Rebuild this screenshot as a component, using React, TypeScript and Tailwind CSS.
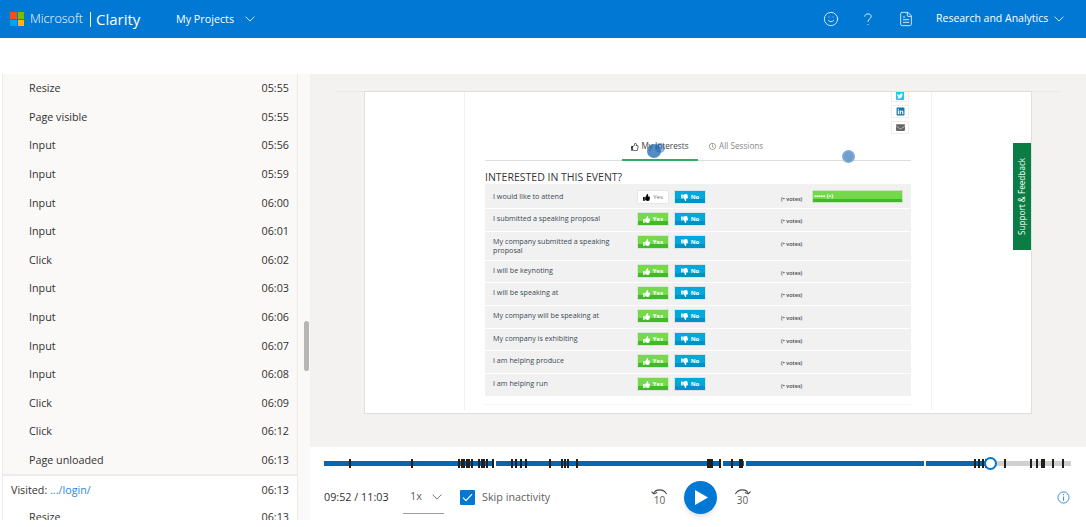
import { FaThumbsUp, FaThumbsDown, FaTwitter, FaLinkedin, FaEnvelope, FaRegThumbsUp, FaRegClock } from "react-icons/fa";
import { Smile, FileText } from "lucide-react";

const EVENTS = [
  ["Resize", "05:55"],
  ["Page visible", "05:55"],
  ["Input", "05:56"],
  ["Input", "05:59"],
  ["Input", "06:00"],
  ["Input", "06:01"],
  ["Click", "06:02"],
  ["Input", "06:03"],
  ["Input", "06:06"],
  ["Input", "06:07"],
  ["Input", "06:08"],
  ["Click", "06:09"],
  ["Click", "06:12"],
  ["Page unloaded", "06:13"],
];

const QUESTIONS = [
  { label: "I would like to attend", h: "h-[24px] pt-[6px]", first: true },
  { label: "I submitted a speaking proposal", h: "h-[22px] pt-[3px]" },
  { label: "My company submitted a speaking proposal", h: "h-[28px] pt-[3px]" },
  { label: "I will be keynoting", h: "h-[21px] pt-[3px]" },
  { label: "I will be speaking at", h: "h-[22px] pt-[3px]" },
  { label: "My company will be speaking at", h: "h-[22px] pt-[3px]" },
  { label: "My company is exhibiting", h: "h-[21px] pt-[3px]" },
  { label: "I am helping produce", h: "h-[22px] pt-[3px]" },
  { label: "I am helping run", h: "h-[22px] pt-[3px]" },
];

// tick positions on the timeline, page x minus track start (324)
const TICKS = [
  25, 87, 134, 137, 139, 142, 144, 147, 154, 157, 159, 162, 168, 187, 191, 196, 201, 225, 237, 240, 243, 252, 383, 385,
  387, 395, 407, 415, 417, 650, 654, 658, 661, 680, 706, 712, 717, 719, 728, 738,
];

function Chevron({ className }: { className: string }) {
  return (
    <svg viewBox="0 0 12 7" className={className} fill="none" stroke="currentColor" strokeWidth="1">
      <path d="M0.7 0.7 L6 6 L11.3 0.7" />
    </svg>
  );
}

function MicrosoftLogo() {
  return (
    <div className="grid grid-cols-2 gap-px w-[14px] h-[14px]">
      <span className="bg-[#f25022]" />
      <span className="bg-[#7fba00]" />
      <span className="bg-[#00a4ef]" />
      <span className="bg-[#ffb900]" />
    </div>
  );
}

function Header() {
  return (
    <header className="h-[38px] shrink-0 bg-[#0078d4] text-white flex items-center pl-[10px] pr-[22px]">
      <MicrosoftLogo />
      <span className="ml-[6px] w-[53px] text-[12.5px] font-light leading-none">Microsoft</span>
      <span className="ml-[7px] w-px h-[15px] bg-white" />
      <span className="ml-[5px] w-[44px] text-[15px] leading-none">Clarity</span>
      <span className="ml-[36px] w-[57px] text-[10.75px] font-medium whitespace-nowrap">My Projects</span>
      <Chevron className="ml-[12px] w-[10px] h-[6px]" />
      <div className="ml-auto flex items-center">
        <Smile size={16} strokeWidth={1.2} />
        <svg viewBox="0 0 10 16" className="ml-[25px] w-[8px] h-[13px]" fill="none" stroke="currentColor" strokeWidth="1.1">
          <path d="M1 4.5 C1 2 3 1 5 1 C7.2 1 9 2.3 9 4.3 C9 7 5 7.2 5 10.8" />
          <circle cx="5" cy="14.3" r="0.7" fill="currentColor" stroke="none" />
        </svg>
        <FileText size={16} strokeWidth={1.2} className="ml-[26px]" />
        <span className="ml-[22px] w-[112px] whitespace-nowrap text-[10.5px] font-medium">Research and Analytics</span>
        <Chevron className="ml-[6px] w-[10px] h-[6px]" />
      </div>
    </header>
  );
}

function EventList() {
  return (
    <aside className="w-[298px] shrink-0 h-full overflow-hidden pl-[2px]">
      <div className="h-full border-x border-[#edebe9] flex flex-col text-[10.75px] text-[#323130]">
        <div className="bg-[#faf9f8] border-b-2 border-[#edebe9]">
          {EVENTS.map(([name, time], i) => (
            <div key={i} className="h-[28.6px] flex items-center justify-between pl-[26px] pr-[8px]">
              <span>{name}</span>
              <span>{time}</span>
            </div>
          ))}
        </div>
        <div className="h-[27px] shrink-0 flex items-center justify-between pl-[8px] pr-[8px]">
          <span>
            Visited: <span className="text-[#2b88d8]">.../login/</span>
          </span>
          <span>06:13</span>
        </div>
        <div className="h-[27px] shrink-0 flex items-center justify-between pl-[26px] pr-[8px]">
          <span>Resize</span>
          <span>06:13</span>
        </div>
      </div>
    </aside>
  );
}

function VoteButton({ kind, active }: { kind: "yes" | "no"; active: boolean }) {
  if (kind === "no") {
    return (
      <span className="w-[32px] h-[14px] border border-[#d8e4ea] bg-[linear-gradient(#00a9dc_68%,#0092c4_68%)] text-white flex items-center justify-center gap-[3px] text-[6px] font-bold">
        <FaThumbsDown size={7} />
        No
      </span>
    );
  }
  if (!active) {
    return (
      <span className="w-[32px] h-[14px] border border-[#e6e6e6] bg-white text-[#777] flex items-center justify-center gap-[3px] text-[6px]">
        <FaThumbsUp size={7} className="text-black" />
        Yes
      </span>
    );
  }
  return (
    <span className="w-[32px] h-[14px] border border-[#d8e8d4] bg-[linear-gradient(#76d84c_68%,#40b92a_68%)] text-white flex items-center justify-center gap-[3px] text-[6px] font-bold">
      <FaThumbsUp size={7} />
      Yes
    </span>
  );
}

function EventPage() {
  return (
    <div className="h-full mx-[99px] border-x border-[#f0f0f0] px-[20px]">
      <div className="-mt-[3px] flex flex-col items-end gap-[3px] pr-[2px]">
        <span className="w-[18px] h-[13px] border border-[#eee] flex items-center justify-center bg-white">
          <span className="w-[8px] h-[8px] bg-[#1ec8f0] flex items-center justify-center text-white">
            <FaTwitter size={6} />
          </span>
        </span>
        <span className="w-[18px] h-[13px] border border-[#eee] flex items-center justify-center text-[#1b75a8]">
          <FaLinkedin size={9} />
        </span>
        <span className="w-[18px] h-[13px] border border-[#eee] flex items-center justify-center text-[#666]">
          <FaEnvelope size={9} />
        </span>
      </div>
      <div className="h-[27px] border-b border-[#ddd] flex items-end text-[8.2px] text-[#444] pl-[137px]">
        <span className="h-[27px] w-[76px] border-b-2 border-[#2fae5f] -mb-px flex items-center justify-center gap-[2px]">
          <FaRegThumbsUp size={8} />
          My Interests
        </span>
        <span className="h-[27px] ml-[11px] flex items-center gap-[3px] text-[#888]">
          <FaRegClock size={7} />
          All Sessions
        </span>
      </div>
      <h2 className="mt-[10px] h-[13px] leading-[13px] text-[10.5px] font-medium text-[#333]">INTERESTED IN THIS EVENT?</h2>
      <div className="flex flex-col gap-px">
        {QUESTIONS.map((q) => (
          <div key={q.label} className={`${q.h} bg-[#f1f1f1] flex items-start pl-[8px] text-[7.2px] leading-[9px] text-[#3c4a55]`}>
            <span className="w-[144px] shrink-0 pr-[20px] mt-[2px] font-medium">{q.label}</span>
            <VoteButton kind="yes" active={!q.first} />
            <span className="ml-[5px]">
              <VoteButton kind="no" active />
            </span>
            <span className="ml-[75px] w-[31px] mt-[5px] text-[5.5px] font-semibold leading-[8px] text-[#444]">(• votes)</span>
            {q.first && (
              <span className="w-[91px] h-[13px] bg-[linear-gradient(#74d84b_70%,#3fb82a_70%)] border border-[#c9e8bd] text-white text-[6px] font-bold leading-[10px] pl-[1px]">
                ••••• (•)
              </span>
            )}
          </div>
        ))}
      </div>
      <div className="mt-[8px] h-px bg-[#f3f3f3]" />
    </div>
  );
}

function Viewer() {
  return (
    <div className="flex-1 min-h-0 bg-[#f3f2f1] overflow-hidden">
      <div className="ml-[25px] mr-[26px] mt-[17px] border-t border-[#ebe9e7] px-[30px]">
        <div className="relative w-[666px] h-[321px] bg-white shadow-[0_0_0_1px_#e1dfdd] overflow-hidden">
          <EventPage />
          <div className="absolute right-0 top-[51px] w-[18px] h-[107px] bg-[#0a7d45] text-white text-[8.2px] flex items-center justify-center [writing-mode:vertical-rl] rotate-180">
            Support &amp; Feedback
          </div>
          <span className="absolute left-[282px] top-[52px] w-[14px] h-[14px] rounded-full bg-[#1f66ad]/75" />
          <span className="absolute left-[290px] top-[51px] w-[10px] h-[10px] rounded-full bg-[#1f66ad]/50" />
          <span className="absolute left-[477px] top-[58px] w-[13px] h-[13px] rounded-full bg-[#3f7fbd]/75 border-[2px] border-[#7fa9d4]" />
        </div>
      </div>
    </div>
  );
}

function Timeline() {
  const played = [170, 225, 21, 178, 63];
  return (
    <div className="relative h-[12px] w-[747px] flex items-center">
      <div className="flex items-center gap-[2px] w-full h-[5px]">
        {played.map((w, i) => (
          <span key={i} className="h-full bg-[#0067b8]" style={{ width: w }} />
        ))}
        <span className="-ml-[2px] h-full flex-1 bg-[#d2d0ce]" />
      </div>
      {TICKS.map((x) => (
        <span key={x} className="absolute top-[1.5px] h-[9px] w-[2px] bg-[#201f1e]" style={{ left: x }} />
      ))}
      <span className="absolute left-[660px] top-0 w-[13px] h-[13px] rounded-full bg-white border-[2.5px] border-[#0078d4]" />
    </div>
  );
}

function SkipIcon({ label, back }: { label: string; back?: boolean }) {
  return (
    <span className="relative w-[17px] h-[22px] text-[#484644] flex justify-center">
      <svg viewBox="0 0 18 10" className={`absolute top-[1px] w-[17px] h-[10px] ${back ? "" : "-scale-x-100"}`} fill="none" stroke="currentColor" strokeWidth="1.1">
        <path d="M3 6 C5 2 13 1 16.5 7" />
        <path d="M0.5 4.5 L3 7 L6.5 5.5" />
      </svg>
      <span className="mt-[7px] text-[10px] leading-[14px] text-[#605e5c]">{label}</span>
    </span>
  );
}

function Controls() {
  return (
    <div className="h-[73px] shrink-0 bg-white pl-[14px] pr-[15px] pt-[10px]">
      <Timeline />
      <div className="relative mt-[10px] h-[36px] flex items-center">
        <span className="text-[10.8px] font-medium text-[#323130] w-[79px]">09:52 / 11:03</span>
        <span className="h-[34px] w-[41px] border-b border-[#a19f9d] flex items-center pl-[7px] text-[11px] text-[#605e5c]">
          1x
          <Chevron className="ml-[10px] w-[10px] h-[6px]" />
        </span>
        <span className="ml-[16px] w-[15px] h-[15px] bg-[#0078d4] rounded-[1px] flex items-center justify-center">
          <svg viewBox="0 0 12 10" className="w-[11px] h-[9px]" fill="none" stroke="white" strokeWidth="1.3">
            <path d="M1 5.2 L4.3 8.5 L11 1.2" />
          </svg>
        </span>
        <span className="ml-[7px] w-[68px] whitespace-nowrap text-[10.8px] text-[#605e5c]">Skip inactivity</span>
        <span className="ml-[101px]">
          <SkipIcon label="10" back />
        </span>
        <span className="ml-[16px] w-[33px] h-[33px] rounded-full bg-[#0078d4] shadow-md flex items-center justify-center">
          <svg viewBox="0 0 14 16" className="w-[13px] h-[15px] ml-[2px]" fill="white">
            <path d="M0 0 L14 8 L0 16 Z" />
          </svg>
        </span>
        <span className="ml-[17px]">
          <SkipIcon label="30" />
        </span>
        <svg viewBox="0 0 14 14" className="ml-auto mr-[1px] w-[13px] h-[13px] text-[#2b88d8]" fill="none" stroke="currentColor" strokeWidth="1">
          <circle cx="7" cy="7" r="6" />
          <path d="M7 6 V10.5 M7 3.3 V4.6" />
        </svg>
      </div>
    </div>
  );
}

export default function App() {
  return (
    <div className="h-[527px] w-[1086px] overflow-hidden bg-white flex flex-col font-['Open_Sans',sans-serif]">
      <Header />
      <div className="h-[36px] shrink-0" />
      <main className="flex-1 min-h-0 flex">
        <EventList />
        <div className="w-[12px] shrink-0 bg-[#faf9f8] relative">
          <span className="absolute left-[6px] top-[247px] w-[5px] h-[50px] rounded-full bg-[#b8b5b2]" />
        </div>
        <div className="flex-1 min-w-0 flex flex-col">
          <Viewer />
          <Controls />
        </div>
      </main>
      <div className="h-[7px] shrink-0" />
    </div>
  );
}
